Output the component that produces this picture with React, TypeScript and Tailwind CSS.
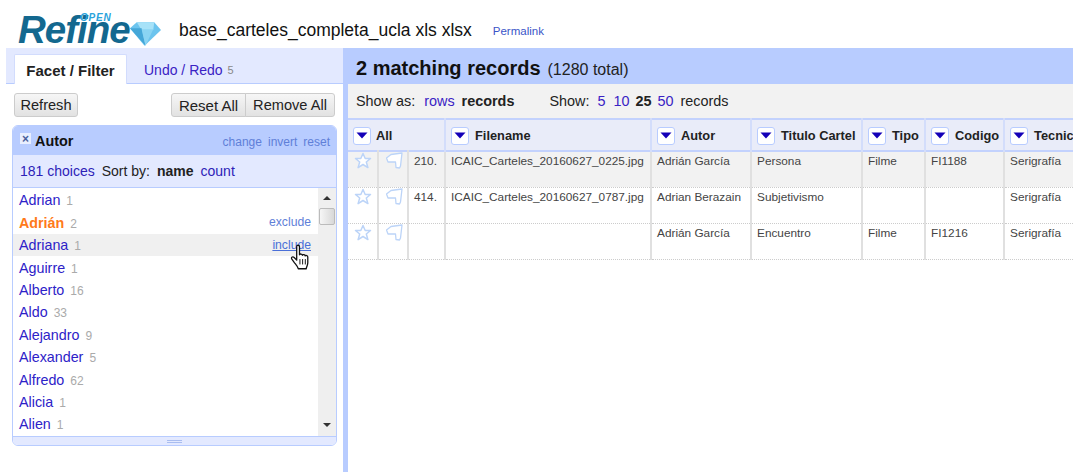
import React from 'react';

const choices = [
  { name: 'Adrian', count: 1 },
  { name: 'Adrián', count: 2, selected: true },
  { name: 'Adriana', count: 1, hover: true },
  { name: 'Aguirre', count: 1 },
  { name: 'Alberto', count: 16 },
  { name: 'Aldo', count: 33 },
  { name: 'Alejandro', count: 9 },
  { name: 'Alexander', count: 5 },
  { name: 'Alfredo', count: 62 },
  { name: 'Alicia', count: 1 },
  { name: 'Alien', count: 1 },
];

const columns = [
  { label: 'Filename', width: 'w-[206px]' },
  { label: 'Autor', width: 'w-[100px]' },
  { label: 'Titulo Cartel', width: 'w-[111px]' },
  { label: 'Tipo', width: 'w-[63px]' },
  { label: 'Codigo', width: 'w-[79px]' },
  { label: 'Tecnica', width: 'w-[110px]' },
];

const rows = [
  { num: '210.', cells: ['ICAIC_Carteles_20160627_0225.jpg', 'Adrián García', 'Persona', 'Filme', 'FI1188', 'Serigrafía'], shaded: true },
  { num: '414.', cells: ['ICAIC_Carteles_20160627_0787.jpg', 'Adrian Berazain', 'Subjetivismo', '', '', 'Serigrafía'] },
  { num: '', cells: ['', 'Adrián García', 'Encuentro', 'Filme', 'FI1216', 'Serigrafía'] },
];

const Dropdown = () => (
  <span className="inline-flex h-[18px] w-[18px] shrink-0 items-center justify-center rounded-[3px] border border-[#b8ccff] bg-white">
    <svg width="12" height="7" viewBox="0 0 12 7">
      <path d="M0.5 0.5h11L6 6.500z" fill="#1400b8" />
    </svg>
  </span>
);

const Star = () => (
  <svg width="18" height="18" viewBox="0 0 18 18" fill="none">
    <path d="M9 1.500l2.200 5h5.300l-4.200 3.500 1.600 5.600L9 12.500l-4.900 3.100 1.600-5.600L1.500 6.500h5.300z" stroke="#bcd4f8" strokeWidth="1.500" fill="#fff" strokeLinejoin="round" />
  </svg>
);

const Flag = () => (
  <svg width="18" height="18" viewBox="0 0 18 18" fill="none">
    <path d="M0.500 6L5 2.500l11-1.500-1.500 13-1 2-3.500-.5-.5-5.500H2z" stroke="#bcd4f8" strokeWidth="1.300" fill="#fff" strokeLinejoin="round" />
  </svg>
);

const Hand = () => (
  <svg className="absolute left-[277px] top-[56px]" width="22" height="28" viewBox="0 0 20 26">
    <path
      d="M6 2.500c0-1.800 2.600-1.800 2.600 0V10c.3-1 2.600-1 2.700.5.300-1 2.500-.900 2.600.6.500-.8 2.400-.5 2.400 1v5.400c0 2-1 3-1.500 5.500H7.500c-.5-2-2-3.500-3.500-5.500L1.500 14c-1-1.700 1-2.800 2.200-1.500L6 15z"
      fill="#fff"
      stroke="#111"
      strokeWidth="1.200"
      strokeLinejoin="round"
    />
    <path d="M9 14v5M11.500 14v5M14 14v5" stroke="#111" strokeWidth="0.900" />
  </svg>
);

const Diamond = () => (
  <svg width="33" height="26" viewBox="0 0 34 26">
    <path d="M1 7L8 1h18l7 8-17 16z" fill="#6cc4ee" />
    <path d="M8 1l5 8h12l1-8z" fill="#a7e2f8" />
    <path d="M1 7h12l4 18z" fill="#45a7d8" />
    <path d="M13 8h12l-8 17z" fill="#8ad4f3" />
  </svg>
);

export default function App() {
  return (
    <div className="flex h-[472px] w-[1073px] flex-col overflow-hidden bg-white font-['Liberation_Sans',Arial,sans-serif] text-[#222]">
      <header className="flex h-[48px] flex-col">
        <div className="ml-[6px] mt-[2px] h-px bg-[#d8d2a0]" />
        <div className="flex flex-1 items-center pl-[18px] pt-[9px]">
          <div className="relative flex w-[161px] items-center">
            <span className="text-[38.500px] font-bold italic leading-none tracking-[-1px] text-[#13688f]">Refine</span>
            <span className="absolute left-[62px] top-[2px] text-[10px] font-bold italic leading-none tracking-[0.8px] text-[#2aa3dc]">OPEN</span>
            <span className="-ml-px mt-[7px]"><Diamond /></span>
          </div>
          <h1 className="text-[17.500px] leading-none text-[#111]">base_carteles_completa_ucla xls xlsx</h1>
          <a className="ml-[21px] mt-[3px] text-[11.500px] text-[#3a55c8]">Permalink</a>
        </div>
      </header>

      <div className="flex min-h-0 flex-1">
        <aside className="flex w-[337px] ml-[6px] shrink-0 flex-col">
          <nav className="flex h-[36px] items-end border-b border-[#b8ccff] bg-[#e3e9ff] pl-[8px]">
            <div className="-mb-px flex h-[30px] w-[113px] items-center justify-center rounded-t-[2px] border border-b-0 border-[#d2dcfd] bg-white pt-[3px] text-[15px] font-bold text-[#222]">
              Facet / Filter
            </div>
            <div className="flex h-[29px] items-center pl-[17px] pt-[3px] text-[14px] text-[#3a22c4]">
              Undo / Redo <span className="ml-[5px] text-[11px] text-[#888]">5</span>
            </div>
          </nav>

          <div className="flex items-center justify-between pl-[8px] pr-[8px] pt-[9px]">
            <button className="h-[24px] w-[64px] rounded-[3px] border border-[#ccc] bg-gradient-to-b from-[#f6f6f6] to-[#e2e2e2] pt-[1px] text-[14.600px] text-[#222]">Refresh</button>
            <div className="flex">
              <button className="h-[24px] w-[75px] rounded-l-[3px] border border-[#ccc] bg-gradient-to-b from-[#f6f6f6] to-[#e2e2e2] pt-[1px] text-[15px] text-[#222]">Reset All</button>
              <button className="-ml-px h-[24px] w-[90px] rounded-r-[3px] border border-[#ccc] bg-gradient-to-b from-[#f6f6f6] to-[#e2e2e2] pt-[1px] text-[14.600px] text-[#222]">Remove All</button>
            </div>
          </div>

          <section className="ml-[6px] mt-[8px] w-[325px] overflow-hidden rounded-[6px] border border-[#b8ccff]">
            <div className="flex h-[29px] items-center justify-between bg-[#b8ccff] pl-[7px] pr-[6px] pt-[2px]">
              <div className="flex items-center">
                <span className="mb-[5px] flex h-[11px] w-[11px] items-center justify-center bg-[#e8eeff] text-[12px] font-bold leading-none text-[#4a5f9c]">×</span>
                <span className="ml-[4px] text-[14.400px] font-bold text-[#111]">Autor</span>
              </div>
              <div className="flex gap-[6px] text-[12px] text-[#5f7fd8]">
                <span>change</span>
                <span>invert</span>
                <span>reset</span>
              </div>
            </div>
            <div className="flex h-[33px] items-center border-b border-[#b8ccff] bg-[#e3e9ff] pl-[7px] text-[14px]">
              <span className="text-[#2d22b8]">181 choices</span>
              <span className="ml-[7px]">Sort by:</span>
              <span className="ml-[7px] font-bold">name</span>
              <span className="ml-[7px] text-[#2d22b8]">count</span>
            </div>
            <div className="relative flex h-[248px]">
              <ul className="flex-1 pt-[1px]">
                {choices.map((c) => (
                  <li key={c.name} className={`flex h-[22.400px] items-center justify-between pl-[6px] pr-[7px] ${c.hover ? 'bg-[#f0f0f0]' : ''}`}>
                    <span className="mt-[2px] text-[14.300px]">
                      <span className={c.selected ? 'font-bold text-[#ff7a1a]' : 'text-[#2d22c8]'}>{c.name}</span>
                      <span className="ml-[6px] text-[12px] text-[#aaa]">{c.count}</span>
                    </span>
                    {c.selected && <span className="text-[12.200px] text-[#5f7fd8]">exclude</span>}
                    {c.hover && <span className="text-[12.200px] text-[#4a6fd8] underline">include</span>}
                  </li>
                ))}
              </ul>
              <div className="flex w-[18px] flex-col items-center bg-[#efefef]">
                <svg className="mt-[8px]" width="8" height="4" viewBox="0 0 8 4"><path d="M0 4h8L4 0z" fill="#333" /></svg>
                <div className="mt-[8px] h-[17px] w-[16px] rounded-[2px] border border-[#bbb] bg-gradient-to-r from-[#f6f6f6] to-[#d8d8d8]" />
                <svg className="mt-auto mb-[9px]" width="8" height="4" viewBox="0 0 8 4"><path d="M0 0h8L4 4z" fill="#333" /></svg>
              </div>
              <Hand />
            </div>
            <div className="flex h-[9px] items-center justify-center border-t border-[#b8ccff] bg-[#e3e9ff]">
              <span className="h-[3px] w-[15px] border-y border-[#a9bdf0]" />
            </div>
          </section>
        </aside>

        <main className="flex min-w-0 flex-1 flex-col border-l-[5px] border-[#b8ccff]">
          <div className="-ml-px flex h-[36px] shrink-0 items-baseline bg-[#b8ccff] pl-[9px] pt-[10px]">
            <span className="text-[20px] font-bold leading-none text-[#111]">2 matching records</span>
            <span className="ml-[7px] text-[16px] leading-none text-[#222]">(1280 total)</span>
          </div>
          <div className="flex h-[34px] shrink-0 items-center bg-[#f2f2f2] pl-[8px] pt-[1px] text-[14.400px]">
            <span>Show as:</span>
            <span className="ml-[9px] text-[#3a22c4]">rows</span>
            <span className="ml-[7px] font-bold">records</span>
            <span className="ml-[35px]">Show:</span>
            <span className="ml-[8px] text-[#3a22c4]">5</span>
            <span className="ml-[8px] text-[#3a22c4]">10</span>
            <span className="ml-[6px] font-bold">25</span>
            <span className="ml-[6px] text-[#3a22c4]">50</span>
            <span className="ml-[7px]">records</span>
          </div>
          <table className="w-[766px] table-fixed border-collapse text-[11.800px] text-[#444]">
            <colgroup>
              <col className="w-[30px]" />
              <col className="w-[30px]" />
              <col className="w-[37px]" />
              {columns.map((col) => <col key={col.label} className={col.width} />)}
            </colgroup>
            <thead>
              <tr className="h-[32px] border-y-2 border-[#c3d2fd] bg-[#e9ecf9] text-[12.800px] font-bold text-[#222]">
                <th colSpan={3} className="border-r-2 border-[#d3ddfb] pl-[5px] pt-[1px] text-left">
                  <div className="flex items-center gap-[5px]"><Dropdown /><span>All</span></div>
                </th>
                {columns.map((col) => (
                  <th key={col.label} className="border-r-2 border-[#d3ddfb] pl-[5px] pt-[1px] text-left">
                    <div className="flex items-center gap-[6px] whitespace-nowrap"><Dropdown /><span>{col.label}</span></div>
                  </th>
                ))}
              </tr>
            </thead>
            <tbody>
              {rows.map((row, i) => (
                <tr key={i} className={`h-[36px] border-b border-dotted border-[#ccc] ${row.shaded ? 'bg-[#f2f2f2]' : ''}`}>
                  <td className="border-r-2 border-[#e0e0e0] pl-[6px] align-top"><Star /></td>
                  <td className="border-r-2 border-[#e0e0e0] pl-[7px] align-top"><Flag /></td>
                  <td className="border-r-2 border-[#e0e0e0] pl-[5px] pt-[1px] align-top">{row.num}</td>
                  {row.cells.map((cell, j) => (
                    <td key={j} className="whitespace-nowrap border-r-2 border-[#e0e0e0] pl-[5px] pt-[1px] align-top">{cell}</td>
                  ))}
                </tr>
              ))}
            </tbody>
          </table>
        </main>
      </div>
    </div>
  );
}
